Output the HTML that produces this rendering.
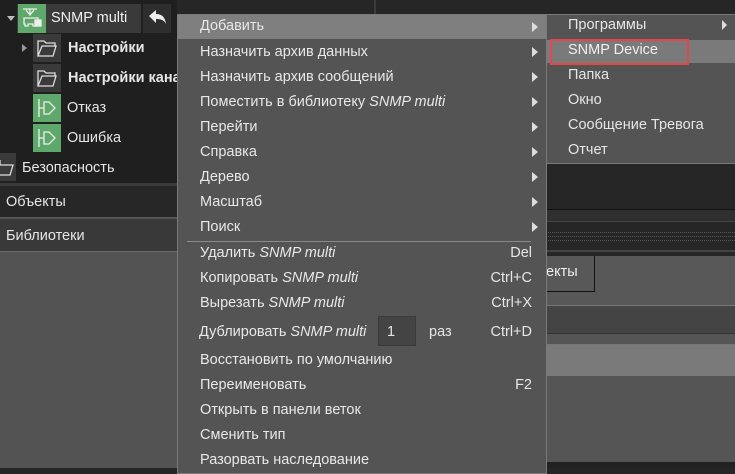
<!DOCTYPE html><html><head><meta charset="utf-8"><style>
*{margin:0;padding:0;box-sizing:border-box}
body{width:735px;height:468px;overflow:hidden;background:#262626;position:relative;font-family:"Segoe UI","Liberation Sans","DejaVu Sans",sans-serif;font-size:14.5px;color:#e6e6e6}
.a{position:absolute}
.t{position:absolute;white-space:nowrap;line-height:20px}
.g{position:absolute;background:#5fa86b;width:28px;height:28px}
.f{position:absolute;background:#3a3a3a;width:28px;height:28px}
.m{position:absolute;left:177px;top:14px;width:370px;height:460px;background:#545454;border:1px solid #7a7a7a}
.mi{position:absolute;left:22px;color:#e8e8e8;white-space:nowrap;line-height:20px}
.ar{position:absolute;left:354px;width:0;height:0;border-left:6px solid #ddd;border-top:5px solid transparent;border-bottom:5px solid transparent}
.sc{position:absolute;right:14px;white-space:nowrap;line-height:20px}
i{font-style:italic}
</style></head><body>
<div class="a" style="left:0;top:0;width:177px;height:183px;background:#1f1f1f"></div>
<div class="a" style="left:17px;top:4px;width:124px;height:29px;background:#3a3a3a"></div>
<div class="a" style="left:143px;top:4px;width:28px;height:29px;background:#2e2e2e"></div>
<div class="a" style="left:7px;top:16px;border-top:5px solid #bbb;border-left:4px solid transparent;border-right:4px solid transparent"></div>
<div class="g" style="left:18px;top:4px;height:29px"></div>
<svg class="a" style="left:20px;top:6px" width="24" height="24" viewBox="0 0 24 24" fill="none" stroke="#eee" stroke-width="1.3"><path d="M3 3h14M10 3v6M6 4l4 5 4-5M4 12h14v6h-2v2h-3v-2H8v2H5v-2H4z"/><rect x="15" y="14" width="6" height="6" fill="#eee"/></svg>
<div class="t" style="left:51px;top:8px;color:#f0f0f0">SNMP multi</div>
<svg class="a" style="left:146px;top:8px" width="22" height="20" viewBox="0 0 22 20"><path d="M3 8l7-6v4c6 0 9 3 10 10-2-4-5-5-10-5v4z" fill="#eee"/></svg>
<div class="a" style="left:22px;top:44px;border-left:5px solid #999;border-top:4px solid transparent;border-bottom:4px solid transparent"></div>
<div class="f" style="left:33px;top:34px"></div>
<div class="f" style="left:33px;top:64px"></div>
<svg class="a" style="left:36px;top:38px" width="22" height="20" viewBox="0 0 22 20" fill="none" stroke="#ddd" stroke-width="1.3"><path d="M2 18V3h6l2 2h9v3M2 18h15l3-10H6z"/></svg>
<svg class="a" style="left:36px;top:68px" width="22" height="20" viewBox="0 0 22 20" fill="none" stroke="#ddd" stroke-width="1.3"><path d="M2 18V3h6l2 2h9v3M2 18h15l3-10H6z"/></svg>
<div class="t" style="left:68px;top:38px;font-weight:bold">Настройки</div>
<div class="t" style="left:68px;top:68px;font-weight:bold">Настройки кана</div>
<div class="g" style="left:33px;top:94px"></div><div class="g" style="left:33px;top:124px"></div>
<svg class="a" style="left:36px;top:97px" width="22" height="22" viewBox="0 0 22 22" fill="none" stroke="#eee" stroke-width="1.3"><path d="M3 2v18M3 11h5M8 5h5l6 6-6 6H8z"/></svg>
<svg class="a" style="left:36px;top:127px" width="22" height="22" viewBox="0 0 22 22" fill="none" stroke="#eee" stroke-width="1.3"><path d="M3 2v18M3 11h5M8 5h5l6 6-6 6H8z"/></svg>
<div class="t" style="left:67px;top:98px">Отказ</div>
<div class="t" style="left:67px;top:128px">Ошибка</div>
<div class="f" style="left:-12px;top:153px;width:28px;background:#3a3a3a"></div>
<svg class="a" style="left:-4px;top:157px" width="18" height="20" viewBox="0 0 18 20" fill="none" stroke="#ddd" stroke-width="1.3"><path d="M2 18h12l3-10H4M4 8V3"/></svg>
<div class="t" style="left:22px;top:158px">Безопасность</div>
<div class="a" style="left:0;top:183px;width:177px;height:3px;background:#3a3a3a"></div>
<div class="a" style="left:0;top:186px;width:177px;height:31px;background:#272727"></div>
<div class="t" style="left:6px;top:192px">Объекты</div>
<div class="a" style="left:0;top:217px;width:177px;height:2px;background:#555"></div>
<div class="a" style="left:0;top:219px;width:177px;height:32px;background:#393939"></div>
<div class="t" style="left:6px;top:226px">Библиотеки</div>
<div class="a" style="left:0;top:251px;width:177px;height:217px;background:#535353;border-top:1px solid #6a6a6a"></div>
<div class="a" style="left:177px;top:0;width:558px;height:14px;background:#262626"></div>
<div class="a" style="left:374px;top:0;width:2px;height:14px;background:#3a3a3a"></div>
<div class="a" style="left:546px;top:209px;width:189px;height:1px;background:#111"></div>
<div class="a" style="left:546px;top:210px;width:189px;height:12px;background:#2f2f2f;border-bottom:1px solid #444"></div>
<div class="a" style="left:546px;top:232px;width:189px;border-top:1px dotted #555"></div>
<div class="a" style="left:546px;top:236px;width:189px;border-top:1px dotted #555"></div>
<div class="a" style="left:546px;top:240px;width:189px;border-top:1px dotted #555"></div>
<div class="a" style="left:546px;top:250px;width:189px;height:2px;background:#444"></div>
<div class="a" style="left:546px;top:256px;width:189px;height:50px;background:#585858"></div>
<div class="a" style="left:540px;top:256px;width:55px;height:36px;border:1px solid #111;border-top:none"></div>
<div class="t" style="left:546px;top:262px;color:#eee">екты</div>
<div class="a" style="left:546px;top:305px;width:189px;height:1px;background:#777"></div>
<div class="a" style="left:546px;top:306px;width:189px;height:27px;background:#444"></div>
<div class="a" style="left:546px;top:333px;width:189px;height:12px;background:#555;border-top:1px solid #333;border-bottom:1px solid #777"></div>
<div class="a" style="left:546px;top:345px;width:189px;height:31px;background:#7a7a7a"></div>
<div class="a" style="left:546px;top:376px;width:189px;height:86px;background:#555"></div>
<div class="a" style="left:546px;top:462px;width:189px;height:6px;background:#222"></div>
<div class="m">
<div class="a" style="left:0;top:0;width:368px;height:24px;background:#7f7f7f"></div>
<div class="mi" style="top:1px">Добавить</div><div class="ar" style="top:7px"></div>
<div class="mi" style="top:27px">Назначить архив данных</div><div class="ar" style="top:32px"></div>
<div class="mi" style="top:52px">Назначить архив сообщений</div><div class="ar" style="top:57px"></div>
<div class="mi" style="top:77px">Поместить в библиотеку <i>SNMP multi</i></div><div class="ar" style="top:82px"></div>
<div class="mi" style="top:102px">Перейти</div><div class="ar" style="top:107px"></div>
<div class="mi" style="top:127px">Справка</div><div class="ar" style="top:132px"></div>
<div class="mi" style="top:152px">Дерево</div><div class="ar" style="top:157px"></div>
<div class="mi" style="top:177px">Масштаб</div><div class="ar" style="top:182px"></div>
<div class="mi" style="top:202px">Поиск</div><div class="ar" style="top:207px"></div>
<div class="a" style="left:9px;top:226px;width:344px;height:1px;background:#8a8a8a"></div>
<div class="mi" style="top:228px">Удалить <i>SNMP multi</i></div><div class="sc" style="top:228px">Del</div>
<div class="mi" style="top:253px">Копировать <i>SNMP multi</i></div><div class="sc" style="top:253px">Ctrl+C</div>
<div class="mi" style="top:278px">Вырезать <i>SNMP multi</i></div><div class="sc" style="top:278px">Ctrl+X</div>
<div class="mi" style="top:307px;left:21px">Дублировать <i>SNMP multi</i></div>
<div class="a" style="left:200px;top:301px;width:38px;height:30px;background:#444;border:1px solid #3a3a3a"></div>
<div class="t" style="left:209px;top:307px">1</div>
<div class="t" style="left:251px;top:307px">раз</div><div class="sc" style="top:307px">Ctrl+D</div>
<div class="mi" style="top:335px">Восстановить по умолчанию</div>
<div class="mi" style="top:360px">Переименовать</div><div class="sc" style="top:360px">F2</div>
<div class="mi" style="top:385px">Открыть в панели веток</div>
<div class="mi" style="top:410px">Сменить тип</div>
<div class="mi" style="top:435px">Разорвать наследование</div>
</div>
<div class="a" style="left:546px;top:14px;width:189px;height:150px;background:#545454;border:1px solid #7a7a7a;border-right:none"></div>
<div class="a" style="left:547px;top:40px;width:188px;height:23px;background:#7a7a7a"></div>
<div class="a" style="left:550px;top:39px;width:139px;height:26px;border:2px solid #e8454a"></div>
<div class="t" style="left:568px;top:15px">Программы</div>
<div class="a" style="left:722px;top:20px;border-left:5px solid #ddd;border-top:5px solid transparent;border-bottom:5px solid transparent"></div>
<div class="t" style="left:568px;top:40px;color:#f0f0f0">SNMP Device</div>
<div class="t" style="left:568px;top:65px">Папка</div>
<div class="t" style="left:568px;top:90px">Окно</div>
<div class="t" style="left:568px;top:115px">Сообщение Тревога</div>
<div class="t" style="left:568px;top:140px">Отчет</div>
</body></html>
